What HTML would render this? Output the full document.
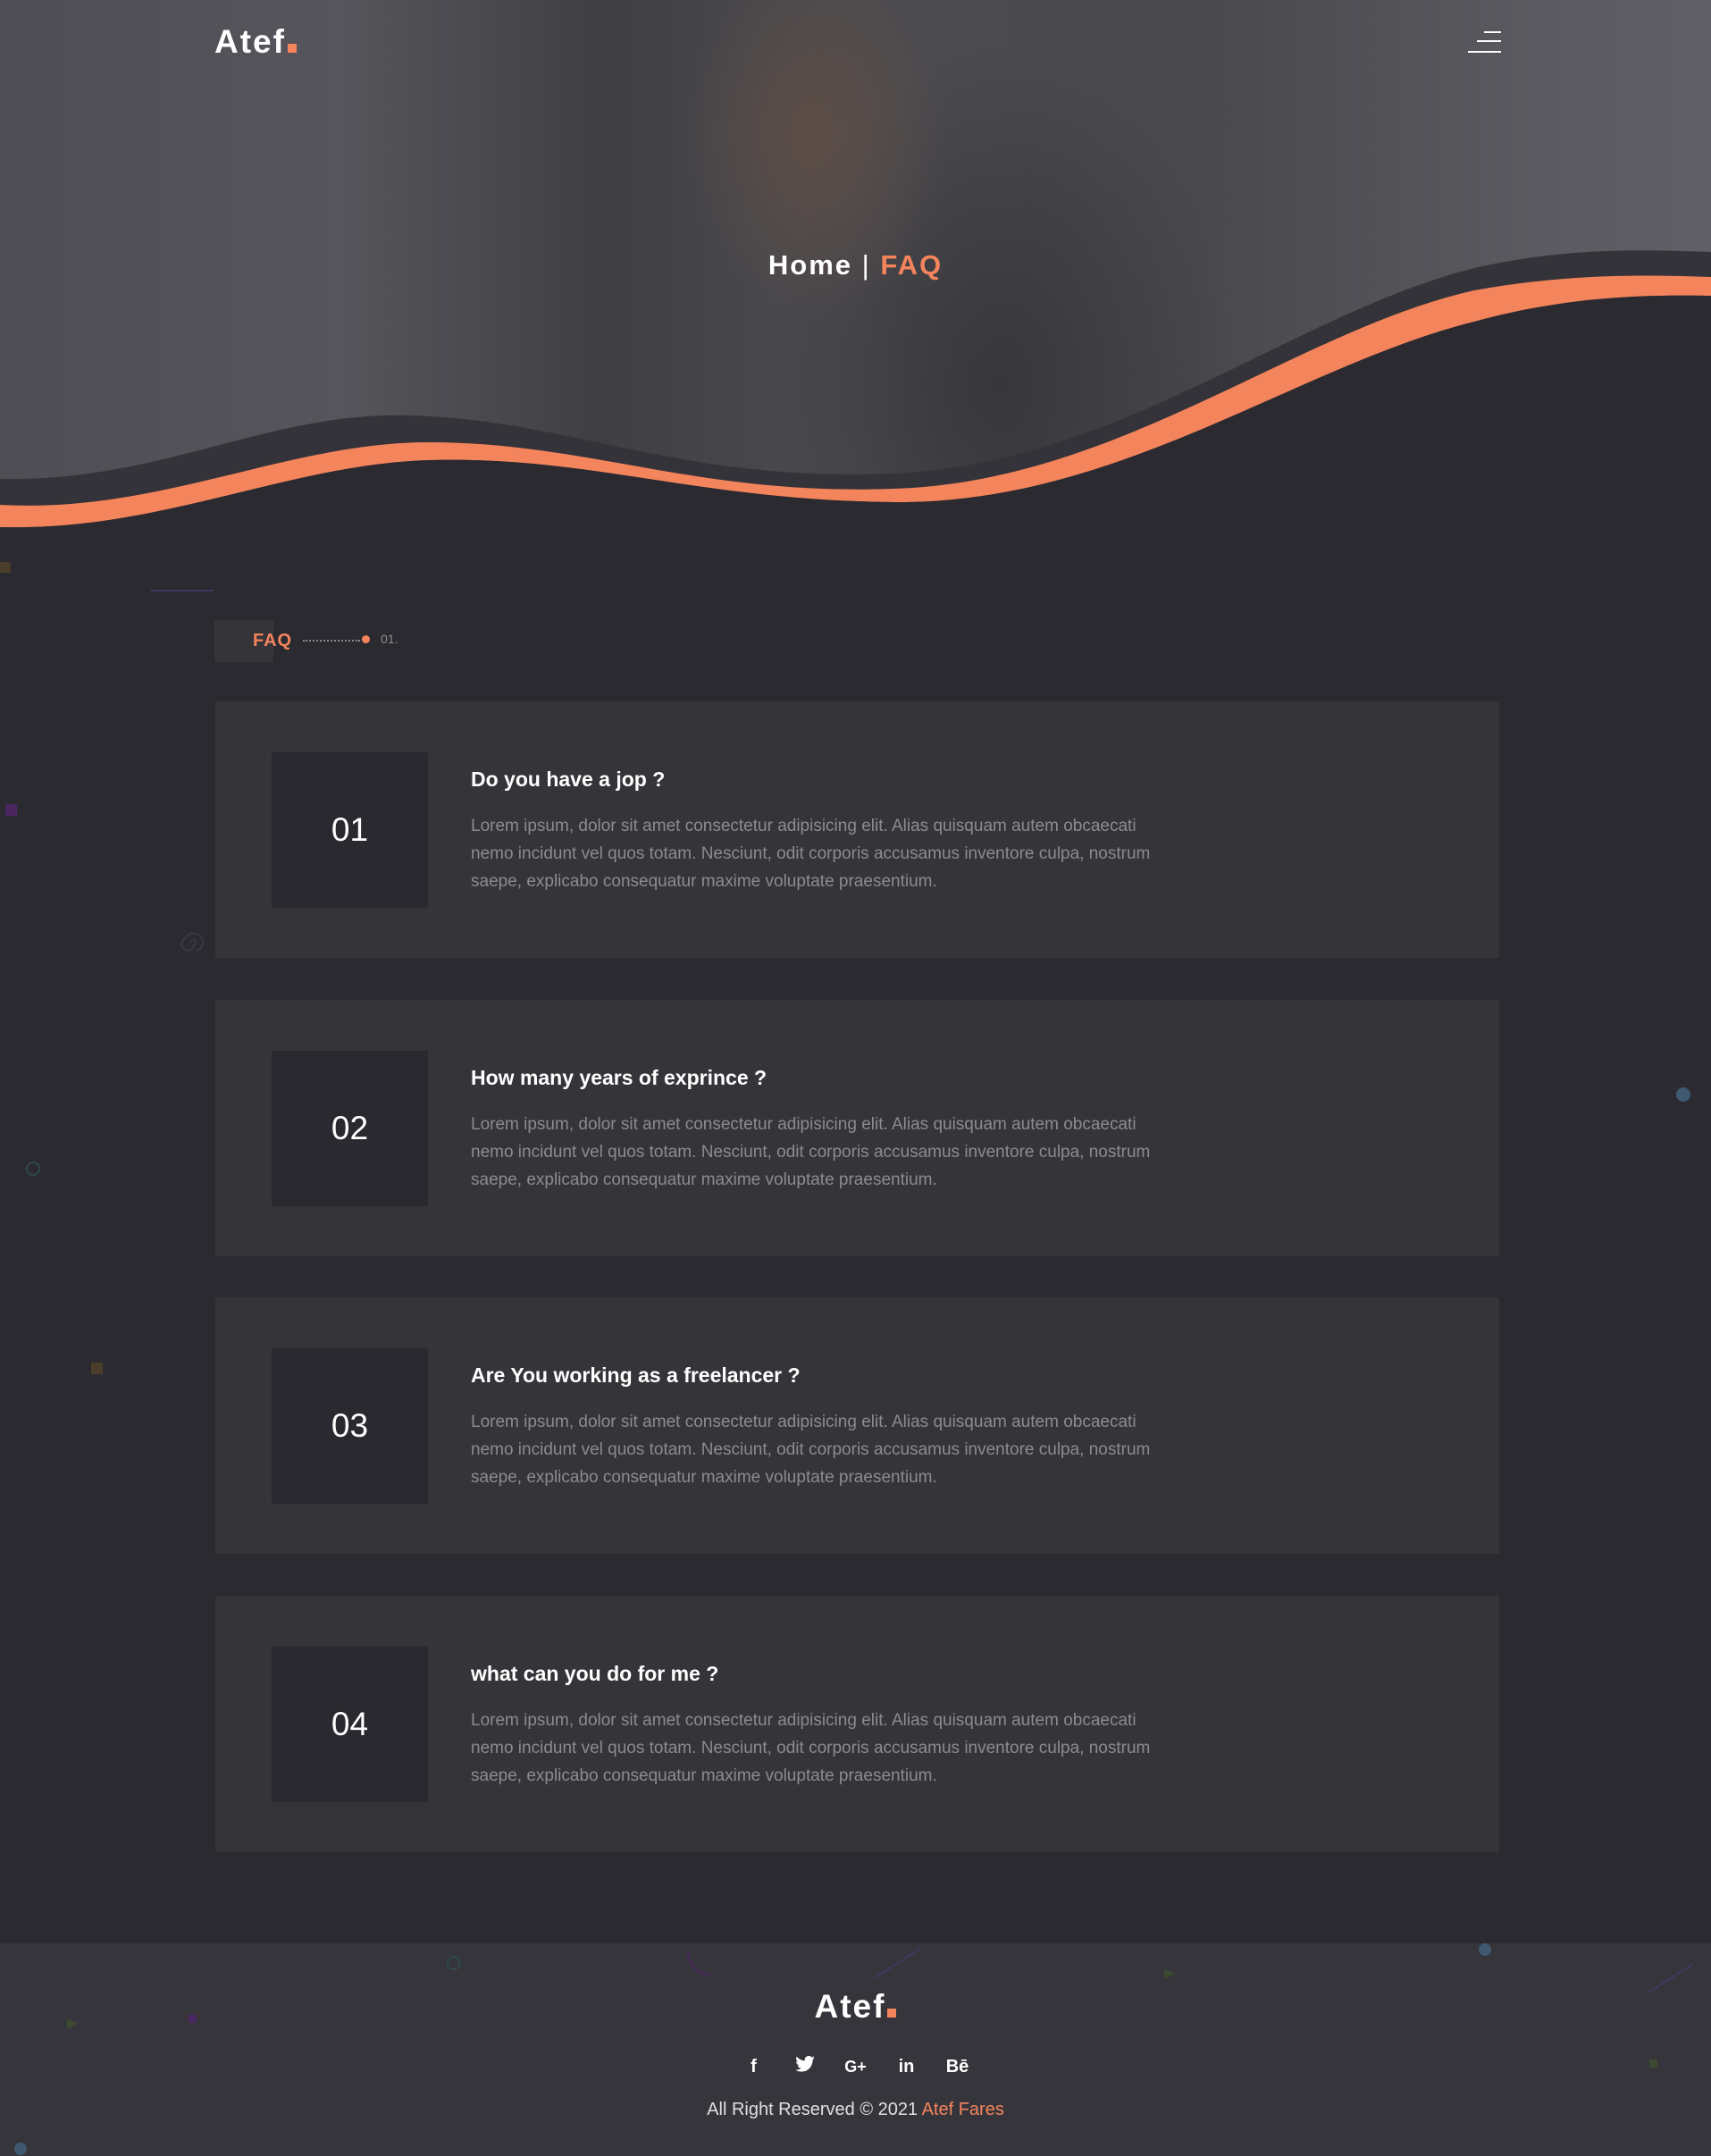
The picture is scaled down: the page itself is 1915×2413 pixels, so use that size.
<!DOCTYPE html>
<html><head><meta charset="utf-8"><style>
*{margin:0;padding:0;box-sizing:border-box}
body{width:1915px;height:2413px;background:#2b2a30;font-family:"Liberation Sans",sans-serif;position:relative;overflow:hidden}
.hero{position:absolute;left:0;top:0;width:1915px;height:620px;background:
radial-gradient(ellipse 150px 210px at 910px 150px,#5e4e47 0%,rgba(94,78,71,0) 100%),
radial-gradient(ellipse 260px 380px at 1120px 430px,#37363b 0%,rgba(55,54,59,0) 100%),
linear-gradient(90deg,#4e4e54 0%,#55555b 20%,#3f3f44 35%,#4c4b50 50%,#48484d 70%,#5a5a60 90%,#606066 100%)}
.abs{position:absolute}
.logo{color:#fff;font-weight:bold;font-size:37px;letter-spacing:2px}
.logo span{display:inline-block;width:10px;height:10px;background:#f4845c;margin-left:2px}
.card{position:absolute;left:241px;width:1437px;height:287px;background:#353439}
.num{position:absolute;left:63px;top:57px;width:175px;height:174px;background:#2a292f;color:#fff;font-size:37px;text-align:center;line-height:174px}
.q{position:absolute;left:286px;top:74px;color:#fff;font-weight:bold;font-size:23px}
.p{position:absolute;left:286px;top:124px;width:785px;color:#8c8b90;font-size:19px;line-height:31px}
.foot{position:absolute;left:0;top:2175px;width:1915px;height:238px;background:#36353b}
.ic{display:inline-block;width:57px;vertical-align:middle}
</style></head><body>
<div class="hero"></div>
<svg class="abs" style="left:0;top:0" width="1915" height="620" viewBox="0 0 1915 620">
<path d="M0 536 C180 540 300 460 460 465 C640 470 760 540 1000 530 C1250 520 1450 350 1650 300 C1760 275 1850 280 1915 282 L1915 620 L0 620Z" fill="#343339"/>
<path d="M0 565 C180 575 320 495 480 495 C660 495 780 555 1000 547 C1250 540 1450 370 1650 325 C1760 305 1850 308 1915 310 L1915 331 C1850 330 1760 330 1650 360 C1450 410 1250 565 1000 562 C780 560 660 510 480 515 C320 520 180 595 0 590Z" fill="#f4845c"/>
<path d="M0 590 C180 595 320 520 480 515 C660 510 780 560 1000 562 C1250 565 1450 410 1650 360 C1760 330 1850 330 1915 331 L1915 620 L0 620Z" fill="#2b2a30"/>
</svg>
<div class="abs logo" style="left:240px;top:26px">Atef<span></span></div>
<div class="abs" style="left:1661px;top:35px;width:19px;height:2px;background:#fff"></div>
<div class="abs" style="left:1653px;top:45px;width:27px;height:2px;background:#fff"></div>
<div class="abs" style="left:1643px;top:57px;width:37px;height:2px;background:#fff"></div>
<div class="abs" style="left:0;top:279px;width:1915px;text-align:center;font-size:31px;font-weight:bold;letter-spacing:2px;color:#fff">Home <span style="font-weight:normal">|</span> <span style="color:#f4845c">FAQ</span></div>

<div class="abs" style="left:0;top:629px;width:12px;height:12px;background:#4a3d2a"></div>
<div class="abs" style="left:169px;top:660px;width:70px;height:2px;background:#3d3a60"></div>
<div class="abs" style="left:6px;top:900px;width:13px;height:13px;background:#4b2660"></div>
<div class="abs" style="left:102px;top:1525px;width:13px;height:13px;background:#4a3d2a"></div>
<div class="abs" style="left:1876px;top:1217px;width:16px;height:16px;border-radius:50%;background:#3f5a70"></div>
<div class="abs" style="left:29px;top:1300px;width:16px;height:16px;border-radius:50%;border:2px solid #2f4a48"></div>
<svg class="abs" style="left:200px;top:1040px" width="30" height="30"><path d="M15 15 m-2 0 a3 3 0 1 1 4 3 a7 7 0 1 1 -9 -8 a10 10 0 1 1 12 14" fill="none" stroke="#3e3640" stroke-width="2"/></svg>

<div class="abs" style="left:240px;top:694px;width:66px;height:47px;background:#353439"></div>
<div class="abs" style="left:283px;top:706px;color:#f4845c;font-weight:bold;font-size:20px;letter-spacing:1px">FAQ</div>
<div class="abs" style="left:339px;top:716px;width:64px;border-top:2px dotted #8c8b90"></div>
<div class="abs" style="left:405px;top:711px;width:9px;height:9px;border-radius:50%;background:#f4845c"></div>
<div class="abs" style="left:426px;top:707px;color:#8c8b90;font-size:14px">01.</div>

<div class="card" style="top:785px"><div class="num">01</div><div class="q">Do you have a jop ?</div><div class="p">Lorem ipsum, dolor sit amet consectetur adipisicing elit. Alias quisquam autem obcaecati nemo incidunt vel quos totam. Nesciunt, odit corporis accusamus inventore culpa, nostrum saepe, explicabo consequatur maxime voluptate praesentium.</div></div>
<div class="card" style="top:1119px"><div class="num">02</div><div class="q">How many years of exprince ?</div><div class="p">Lorem ipsum, dolor sit amet consectetur adipisicing elit. Alias quisquam autem obcaecati nemo incidunt vel quos totam. Nesciunt, odit corporis accusamus inventore culpa, nostrum saepe, explicabo consequatur maxime voluptate praesentium.</div></div>
<div class="card" style="top:1452px"><div class="num">03</div><div class="q">Are You working as a freelancer ?</div><div class="p">Lorem ipsum, dolor sit amet consectetur adipisicing elit. Alias quisquam autem obcaecati nemo incidunt vel quos totam. Nesciunt, odit corporis accusamus inventore culpa, nostrum saepe, explicabo consequatur maxime voluptate praesentium.</div></div>
<div class="card" style="top:1786px"><div class="num">04</div><div class="q">what can you do for me ?</div><div class="p">Lorem ipsum, dolor sit amet consectetur adipisicing elit. Alias quisquam autem obcaecati nemo incidunt vel quos totam. Nesciunt, odit corporis accusamus inventore culpa, nostrum saepe, explicabo consequatur maxime voluptate praesentium.</div></div>

<div class="foot"></div>
<svg class="abs" style="left:0;top:2175px" width="1915" height="238">
<line x1="980" y1="38" x2="1030" y2="6" stroke="#3d3a60" stroke-width="2"/>
<line x1="1845" y1="55" x2="1895" y2="23" stroke="#3d3a60" stroke-width="2"/>
<path d="M770 10 a25 25 0 0 0 25 25" fill="none" stroke="#4b2660" stroke-width="2"/>
<circle cx="508" cy="22" r="7" fill="none" stroke="#2f4a48" stroke-width="2"/>
<circle cx="1662" cy="7" r="7" fill="#3f5a70"/>
<circle cx="23" cy="230" r="7" fill="#3f5a70"/>
<rect x="211" y="80" width="9" height="9" fill="#4b2660"/>
<path d="M75 84 L87 90 L75 96Z" fill="#3b4a30"/>
<path d="M1303 28 L1315 34 L1303 40Z" fill="#3b4a30"/>
<rect x="1846" y="130" width="9" height="9" fill="#3b4a30"/>
</svg>
<div class="abs logo" style="left:0;top:2225px;width:1915px;text-align:center">Atef<span></span></div>
<div class="abs" style="left:0;top:2301px;width:1915px;text-align:center;color:#fff;font-weight:bold;font-size:20px">
<span class="ic">f</span><span class="ic"><svg width="22" height="18" viewBox="0 0 24 20"><path fill="#fff" d="M24 2.4a10 10 0 0 1-2.8.8A5 5 0 0 0 23.3.4a10 10 0 0 1-3.1 1.2A4.9 4.9 0 0 0 11.8 6 14 14 0 0 1 1.7.9a4.9 4.9 0 0 0 1.5 6.6A4.9 4.9 0 0 1 1 6.9a4.9 4.9 0 0 0 3.9 4.9 5 5 0 0 1-2.2.1 4.9 4.9 0 0 0 4.6 3.4A9.9 9.9 0 0 1 0 17.3 14 14 0 0 0 7.5 19.5c9.1 0 14-7.5 14-14v-.6A10 10 0 0 0 24 2.4z"/></svg></span><span class="ic" style="font-size:18px">G+</span><span class="ic">in</span><span class="ic">Bē</span></div>
<div class="abs" style="left:0;top:2350px;width:1915px;text-align:center;color:#e0e0e0;font-size:20px">All Right Reserved © 2021 <span style="color:#f4845c">Atef Fares</span></div>
</body></html>
